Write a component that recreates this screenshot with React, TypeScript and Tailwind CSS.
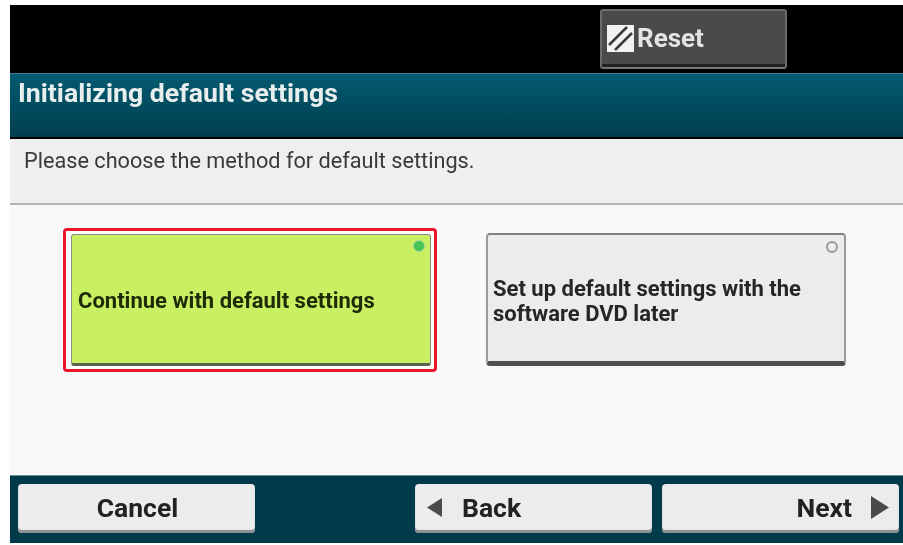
function Dot({ on }: { on: boolean }) {
  return (
    <span
      className={
        on
          ? "absolute right-[5px] top-[5px] h-[12px] w-[12px] rounded-full border border-[#a8d8a0] bg-[#45c455]"
          : "absolute right-[6px] top-[6px] h-[12px] w-[12px] rounded-full border-2 border-[#999999] bg-[#ececec]"
      }
    />
  );
}

function FootButton({
  className,
  children,
}: {
  className: string;
  children: React.ReactNode;
}) {
  return (
    <div
      className={
        "flex h-[49px] w-[237px] shrink-0 items-center rounded-[4px] bg-[#ececec] pb-[2px] text-[26.5px] font-bold text-[#222222] shadow-[inset_0_-3px_1px_#8a8e8e] " +
        className
      }
    >
      {children}
    </div>
  );
}

export default function App() {
  return (
    <div className="h-[545px] w-[903px] overflow-hidden bg-white pb-[2px] pl-[10px] pt-[5px] font-['Roboto',sans-serif] blur-[0.6px]">
      <div className="flex h-[538px] flex-col bg-[#f8f8f8]">
        <div className="flex h-[68px] shrink-0 items-center bg-black pl-[590px]">
          <div className="flex h-[60px] w-[187px] items-center gap-[3px] rounded-[3px] border-2 border-[#6b6b6b] border-b-[#777777] bg-[#4a4a4a] pb-[2px] pl-[5px] shadow-[inset_0_-3px_0_#222222]">
            <svg width="27" height="27" viewBox="0 0 27 27" className="shrink-0">
              <rect width="27" height="27" fill="#f2f2f2" />
              <path d="M2 20 L20 2 M8 25 L25 8" stroke="#3a3a3a" strokeWidth="2.5" />
            </svg>
            <span className="text-[26px] font-bold leading-none text-[#e4e4e4]">Reset</span>
          </div>
        </div>

        <div className="h-[64px] shrink-0 border-t border-[#3f7f91] bg-gradient-to-b from-[#035a70] to-[#013f50] pl-[8px] pt-[3px] text-[26.7px] font-bold leading-[32px] text-[#e8eeee]">
          Initializing default settings
        </div>

        <div className="h-[68px] shrink-0 border-b-2 border-b-[#b4b4b4] border-t-2 border-t-black bg-[#efefef] pl-[14px] pt-[8px] text-[21.7px] leading-[28px] text-[#3a3a3a]">
          Please choose the method for default settings.
        </div>

        <div className="flex flex-1 items-start pl-[53px] pt-[23px]">
          <div className="shrink-0 rounded-[4px] border-[3px] border-[#e8182a] bg-white py-[3px] pl-[5px] pr-[3px]">
            <div className="relative flex h-[132px] w-[360px] items-center rounded-[3px] border border-[#8a8a8a] border-b-[3px] border-b-[#5c6350] bg-[#c9f063] pl-[6px] pt-[2px] text-[22px] font-bold text-[#1e2b06]">
              <Dot on />
              Continue with default settings
            </div>
          </div>
          <div className="relative ml-[49px] mt-[5px] flex h-[133px] w-[360px] shrink-0 items-center rounded-[4px] border-2 border-[#9a9a9a] border-b-[5px] border-b-[#4f4f4f] border-t-[#808080] bg-[#ececec] pl-[5px] pt-[6px] text-[22px] font-bold leading-[25px] text-[#262626]">
            <Dot on={false} />
            <span>
              Set up default settings with the
              <br />
              software DVD later
            </span>
          </div>
        </div>

        <div className="flex h-[68px] shrink-0 items-start border-t border-[#6f8c95] bg-[#013a4b] pl-[8px] pt-[8px]">
          <FootButton className="justify-center pl-[2px]">Cancel</FootButton>
          <FootButton className="ml-[160px] pl-[12px]">
            <svg width="15" height="19" viewBox="0 0 15 19" className="mr-[20px]">
              <path d="M15 0 V19 L0 9.5 Z" fill="#4a4a4a" />
            </svg>
            Back
          </FootButton>
          <FootButton className="ml-[10px] justify-end pr-[10px]">
            Next
            <svg width="18" height="23" viewBox="0 0 18 23" className="ml-[19px]">
              <path d="M0 0 V23 L18 11.5 Z" fill="#4a4a4a" />
            </svg>
          </FootButton>
        </div>
      </div>
    </div>
  );
}
